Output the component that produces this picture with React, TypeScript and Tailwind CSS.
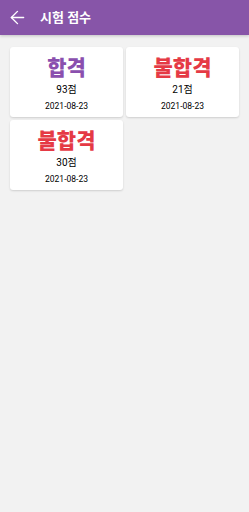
import { ArrowLeft } from "lucide-react";

type Score = { passed: boolean; score: number; date: string };

const scores: Score[] = [
  { passed: true, score: 93, date: "2021-08-23" },
  { passed: false, score: 21, date: "2021-08-23" },
  { passed: false, score: 30, date: "2021-08-23" },
];

function ScoreCard({ item }: { item: Score }) {
  return (
    <div className="flex h-[70px] flex-col items-center rounded-[3px] bg-white pt-[6px] shadow-[0_1px_2px_rgba(0,0,0,0.15)]">
      <p
        className={
          item.passed
            ? "text-[21px] font-black leading-[30px] text-[#8a4fae]"
            : "text-[21px] font-black leading-[30px] text-[#e53a45]"
        }
      >
        {item.passed ? "합격" : "불합격"}
      </p>
      <p className="text-[10px] leading-[14px] text-black">{item.score}점</p>
      <p className="mt-[3px] text-[8.5px] leading-[12px] text-black">{item.date}</p>
    </div>
  );
}

export default function App() {
  return (
    <div
      className="min-h-[512px] w-full bg-[#f2f2f2]"
      style={{ fontFamily: "Roboto, 'Noto Sans CJK KR', sans-serif" }}
    >
      <header className="flex h-[35px] items-center bg-[#8755a8] px-[7px] text-white shadow-[0_1px_3px_rgba(0,0,0,0.2)]">
        <ArrowLeft className="h-[21px] w-[21px]" strokeWidth={1.6} />
        <h1 className="ml-[12px] text-[13px] font-bold">시험 점수</h1>
      </header>
      <div className="grid grid-cols-2 gap-[3px] px-[10px] pt-[12px]">
        {scores.map((item, i) => (
          <ScoreCard key={i} item={item} />
        ))}
      </div>
    </div>
  );
}
